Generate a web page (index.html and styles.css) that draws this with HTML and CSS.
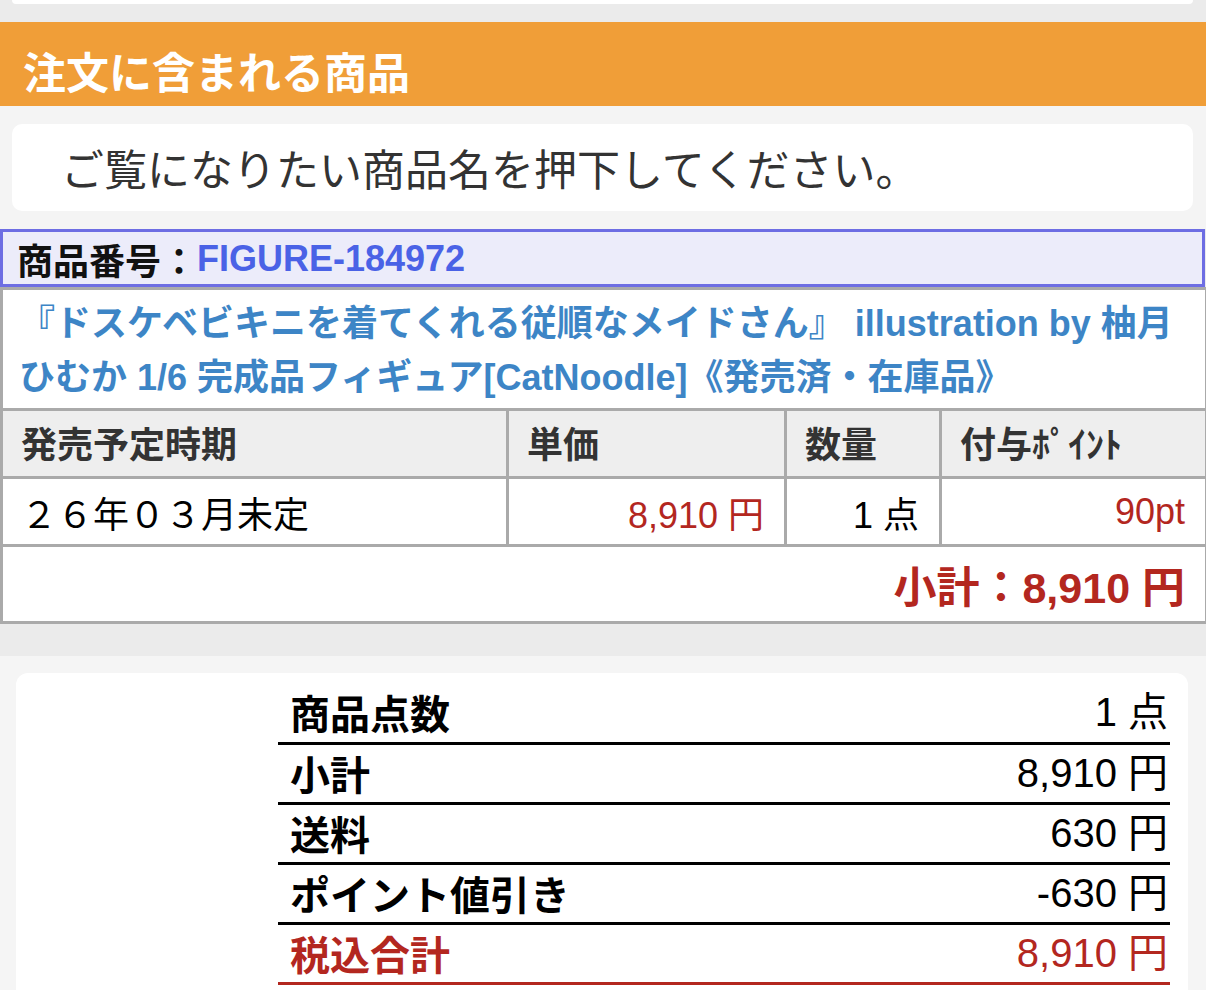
FILE: index.html
```html
<!DOCTYPE html>
<html lang="ja">
<head>
<meta charset="utf-8">
<title>注文に含まれる商品</title>
<link rel="stylesheet" href="styles.css">
</head>
<body>
<div class="top-card"></div>

<h2 class="section-title">注文に含まれる商品</h2>

<div class="notice-wrap">
  <div class="notice-card">ご覧になりたい商品名を押下してください。</div>
</div>

<div class="product">
  <div class="code-row"><span class="code-label">商品番号：</span><span class="code-value">FIGURE-184972</span></div>
  <table class="item-table">
    <colgroup>
      <col class="c1"><col class="c2"><col class="c3"><col class="c4">
    </colgroup>
    <tr class="name-row">
      <td colspan="4"><a class="item-name" href="#">『ドスケベビキニを着てくれる従順なメイドさん』 illustration by 柚月<br>ひむか 1/6 完成品フィギュア[CatNoodle]《発売済・在庫品》</a></td>
    </tr>
    <tr class="head-row">
      <th>発売予定時期</th>
      <th>単価</th>
      <th>数量</th>
      <th>付与ﾎﾟｲﾝﾄ</th>
    </tr>
    <tr class="data-row">
      <td class="date">２６年０３月未定</td>
      <td class="num red">8,910 円</td>
      <td class="num">1 点</td>
      <td class="num red">90pt</td>
    </tr>
    <tr class="sub-row">
      <td colspan="4">小計：8,910 円</td>
    </tr>
  </table>
</div>

<div class="summary-wrap">
  <div class="summary-card">
    <table class="summary">
      <tr><th>商品点数</th><td>1 点</td></tr>
      <tr><th>小計</th><td>8,910 円</td></tr>
      <tr><th>送料</th><td>630 円</td></tr>
      <tr><th>ポイント値引き</th><td>-630 円</td></tr>
      <tr class="total"><th>税込合計</th><td>8,910 円</td></tr>
    </table>
  </div>
</div>
</body>
</html>
```

FILE: styles.css
```css
* { box-sizing: border-box; }
html, body { margin: 0; padding: 0; }
body {
  width: 1206px;
  min-height: 990px;
  background: #ebebeb;
  font-family: "Liberation Sans", "Noto Sans CJK JP", sans-serif;
  color: #000;
}

.top-card {
  height: 4px;
  margin: 0 13px 0 12px;
  background: #fff;
  border-radius: 0 0 8px 8px;
}

.section-title {
  margin: 18px 0 0;
  height: 84px;
  padding: 25px 0 0 23px;
  background: #f09e38;
  color: #fff;
  font-family: "Noto Sans CJK JP", sans-serif;
  font-weight: 700;
  font-size: 43px;
  line-height: 46px;
}

.notice-wrap {
  background: #f4f4f4;
  padding: 18px 13px 18px 12px;
}
.notice-card {
  height: 87px;
  display: flex;
  align-items: center;
  padding-left: 49px;
  padding-bottom: 2px;
  background: #fff;
  border-radius: 10px;
  font-family: "Noto Sans CJK JP", sans-serif;
  font-size: 43px;
  color: #333;
}

.product { background: #eeeeee; margin-right: 1px; }

.code-row {
  height: 58px;
  display: flex;
  align-items: center;
  padding-left: 14px;
  padding-top: 2px;
  background: #ececfa;
  border: 3px solid #6d6de3;
  font-size: 36px;
  font-weight: 700;
}
.code-label { color: #111; }
.code-value { color: #4a62e6; }

.item-table {
  width: 100%;
  border-collapse: collapse;
  table-layout: fixed;
  background: #fff;
}
.item-table col.c1 { width: 506px; }
.item-table col.c2 { width: 278px; }
.item-table col.c3 { width: 155px; }
.item-table col.c4 { width: 266px; }
.item-table td,
.item-table th {
  border: 3px solid #aaaaaa;
  padding: 0 19px;
  font-size: 36px;
}

.name-row td {
  height: 121px;
  padding: 7px 10px 0 16px;
  white-space: nowrap;
  line-height: 54px;
  vertical-align: top;
}
.item-name {
  color: #3d85c6;
  font-weight: 700;
  text-decoration: none;
}

.head-row th {
  height: 68px;
  background: #eeeeee;
  color: #333;
  font-weight: 700;
  text-align: left;
  padding-left: 18px;
  padding-bottom: 3px;
}

.data-row td { height: 68px; }
.data-row .date { padding-left: 18px; }
.data-row .num { text-align: right; padding-right: 20px; }
.red { color: #b3271f; }

.sub-row td {
  height: 77px;
  text-align: right;
  padding-right: 20px;
  font-size: 43px;
  font-weight: 700;
  color: #b3271f;
}

.summary-wrap {
  margin-top: 32px;
  background: #f5f5f5;
  padding: 17px 18px 0 16px;
  min-height: 334px;
}
.summary-card {
  background: #fff;
  border-radius: 12px;
  padding: 10px 18px 20px 0;
  min-height: 317px;
}
.summary {
  width: 892px;
  margin-left: auto;
  border-collapse: collapse;
  font-size: 40px;
}
.summary th,
.summary td {
  height: 60px;
  padding: 0 0 1px 12px;
  line-height: 50px;
  border-bottom: 3px solid #000;
}
.summary th {
  text-align: left;
  font-family: "Noto Sans CJK JP", sans-serif;
  font-weight: 700;
}
.summary td { text-align: right; padding-right: 2px; font-weight: 400; }
.summary .total th,
.summary .total td {
  color: #b3271f;
  border-bottom-color: #b3271f;
}
```
